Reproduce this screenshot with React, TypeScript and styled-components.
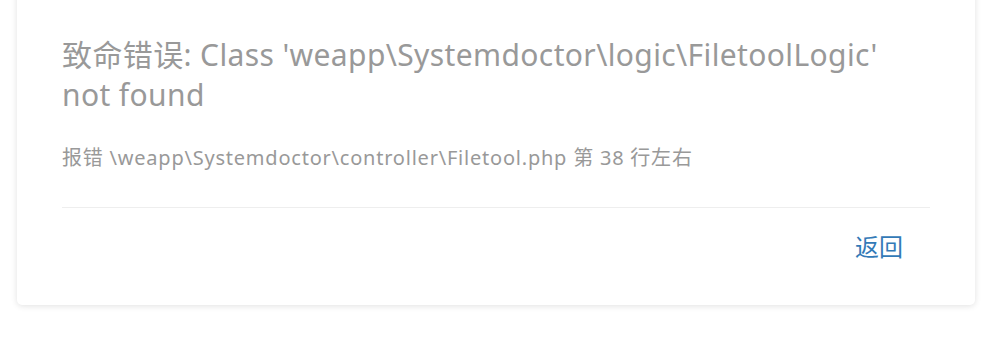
import React from "react";
import styled, { createGlobalStyle } from "styled-components";

const Global = createGlobalStyle`
  html, body { margin: 0; padding: 0; background: #fff; }
  body { font-family: "Noto Sans", "Noto Sans CJK SC", sans-serif; }
`;

const Page = styled.div`
  padding: 0 12px 0 17px;
  overflow: hidden;
  height: 337px;
  box-sizing: border-box;
`;

const Card = styled.div`
  margin-top: -10px;
  background: #fff;
  border-radius: 0 0 5px 5px;
  box-shadow: 0 1px 6px rgba(0, 0, 0, 0.12);
  padding: 45px 45px 41px;
`;

const Title = styled.h1`
  margin: 0;
  font-size: 30px;
  line-height: 40px;
  font-weight: 400;
  color: #999;
  letter-spacing: 0.38px;
`;

const Detail = styled.p`
  margin: 29px 0 0;
  font-size: 20px;
  line-height: 28px;
  color: #999;
  letter-spacing: 0.78px;
`;

const Divider = styled.hr`
  margin: 35px 0 0;
  border: 0;
  border-top: 1px solid #eee;
`;

const Footer = styled.div`
  display: flex;
  justify-content: flex-end;
  padding: 22px 27px 0 0;
`;

const BackLink = styled.a`
  font-size: 24px;
  line-height: 34px;
  color: #337ab7;
  text-decoration: none;
  cursor: pointer;
`;

export default function App() {
  return (
    <>
      <Global />
      <Page>
        <Card>
          <Title>
            致命错误: Class 'weapp\Systemdoctor\logic\FiletoolLogic'
            <br />
            not found
          </Title>
          <Detail>报错 \weapp\Systemdoctor\controller\Filetool.php 第 38 行左右</Detail>
          <Divider />
          <Footer>
            <BackLink href="#">返回</BackLink>
          </Footer>
        </Card>
      </Page>
    </>
  );
}
